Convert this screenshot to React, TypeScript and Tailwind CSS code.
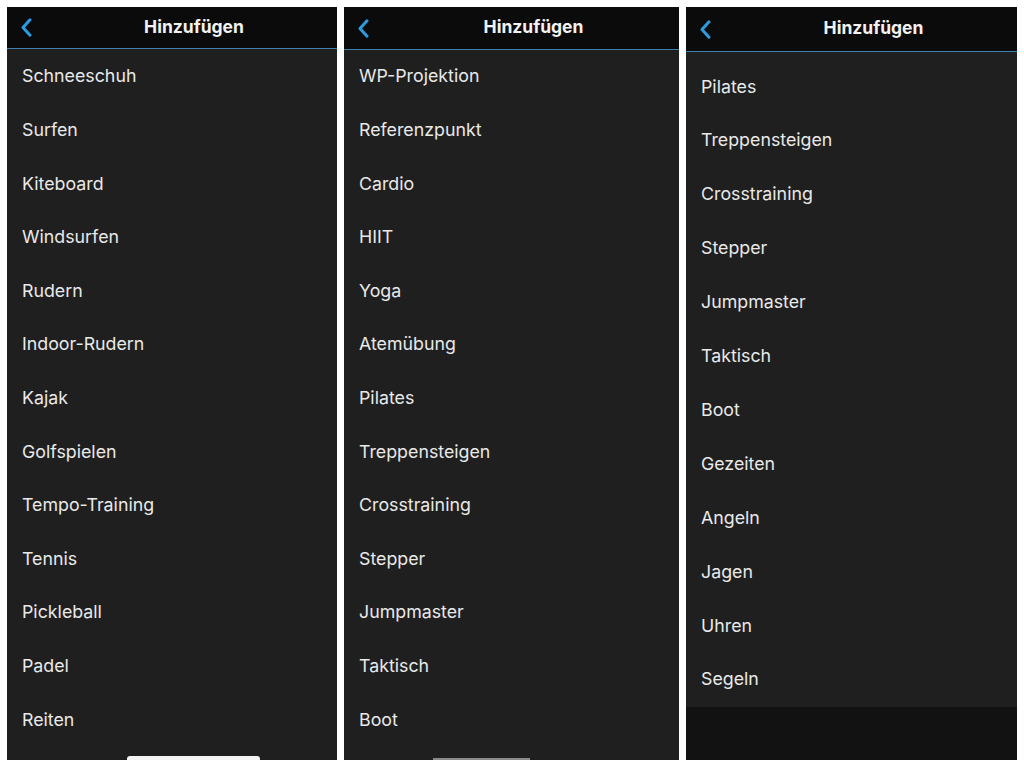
import React from "react";

const p1 = ["Schneeschuh","Surfen","Kiteboard","Windsurfen","Rudern","Indoor-Rudern","Kajak","Golfspielen","Tempo-Training","Tennis","Pickleball","Padel","Reiten"];
const p2 = ["WP-Projektion","Referenzpunkt","Cardio","HIIT","Yoga","Atemübung","Pilates","Treppensteigen","Crosstraining","Stepper","Jumpmaster","Taktisch","Boot"];
const p3 = ["Pilates","Treppensteigen","Crosstraining","Stepper","Jumpmaster","Taktisch","Boot","Gezeiten","Angeln","Jagen","Uhren","Segeln"];

function Chevron() {
  return (
    <svg width="11" height="19" viewBox="0 0 11 19" className="shrink-0">
      <path d="M9 1.8 L2 9.5 L9 17.2" fill="none" stroke="#2a9de2" strokeWidth="3" strokeLinecap="round" strokeLinejoin="round" />
    </svg>
  );
}

function Header({ h }: { h: string }) {
  return (
    <div className={`flex items-center pl-[14px] pr-[15px] bg-[#0b0b0b] border-b border-[#3f82b0] ${h}`}>
      <Chevron />
      <div className="flex-1 text-center pl-[34px] text-[17.5px] font-bold text-[#f2f2f2] leading-none -mt-[2px]">Hinzufügen</div>
    </div>
  );
}

function Row({ t, h }: { t: string; h: string }) {
  return (
    <div className={`flex items-center px-[15px] text-[17.8px] text-[#e9e9e9] ${h}`}>{t}</div>
  );
}

export default function App() {
  return (
    <div className="w-[1024px] h-[768px] bg-white flex gap-[7px] pl-[7px] pt-[7px]" style={{ fontFamily: "Inter, 'Noto Sans', sans-serif" }}>
      <div className="relative w-[330px] h-[753px] bg-[#1f1f1f] flex flex-col overflow-hidden">
        <Header h="h-[42px]" />
        <div className="flex flex-col pt-[1px]">
          {p1.map((t) => <Row key={t} t={t} h="h-[53.6px]" />)}
        </div>
        <div className="absolute bottom-0 left-[120px] w-[133px] h-[4px] rounded-t-[3px] bg-[#f4f4f4]" />
      </div>
      <div className="relative w-[335px] h-[753px] bg-[#1f1f1f] flex flex-col overflow-hidden">
        <Header h="h-[43px]" />
        <div className="flex flex-col">
          {p2.map((t) => <Row key={t} t={t} h="h-[53.6px]" />)}
        </div>
        <div className="absolute bottom-0 left-[89px] w-[97px] h-[2px] bg-[#8a8a8a]" />
      </div>
      <div className="w-[331px] h-[753px] bg-[#121212] flex flex-col overflow-hidden">
        <Header h="h-[45px]" />
        <div className="flex flex-col bg-[#1f1f1f] pt-[8px]">
          {p3.map((t) => <Row key={t} t={t} h="h-[53.9px]" />)}
        </div>
      </div>
    </div>
  );
}
